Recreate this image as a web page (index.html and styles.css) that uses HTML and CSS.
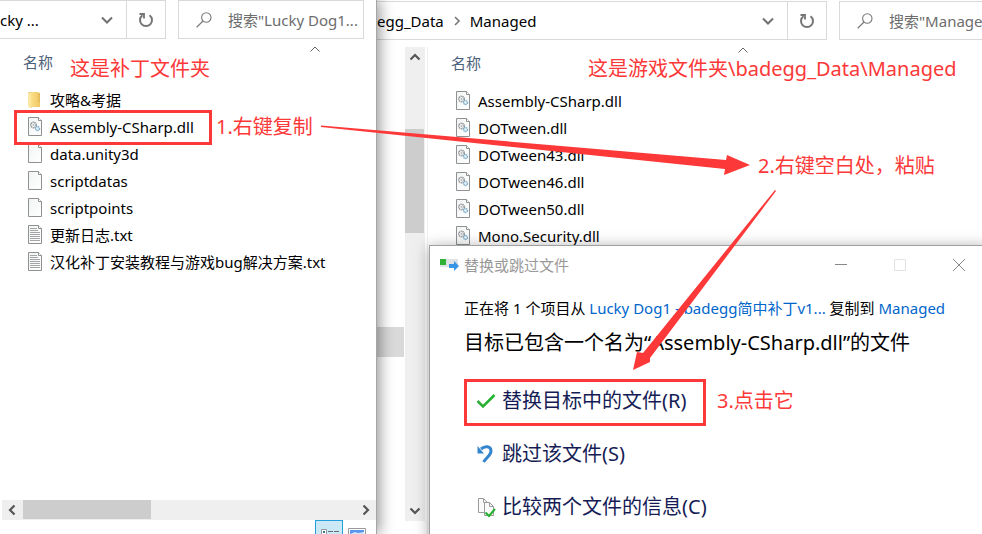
FILE: index.html
```html
<!DOCTYPE html>
<html lang="zh-CN">
<head>
<meta charset="utf-8">
<meta name="viewport" content="width=device-width, initial-scale=1">
<title>补丁安装教程</title>
<link rel="stylesheet" href="styles.css">
</head>
<body>
<svg class="sprites" aria-hidden="true">
  <defs>
    <linearGradient id="paper" x1="0" y1="0" x2="1" y2="1"><stop offset="0" stop-color="#f2f4f4"/><stop offset="1" stop-color="#fff"/></linearGradient>
    <linearGradient id="folder" x1="0" x2="1"><stop offset="0" stop-color="#fbdf86"/><stop offset="1" stop-color="#efc765"/></linearGradient>
    <linearGradient id="tick" x1="0" x2="1"><stop offset="0" stop-color="#2fae3a"/><stop offset="1" stop-color="#22b52c"/></linearGradient>
  </defs>
  <symbol id="i-page" viewBox="0 0 15 19">
    <path d="M.5.5h10l3 3v15H.5z" fill="url(#paper)" stroke="#8e9091"/>
    <path d="M10.500.5v3h3" fill="#fff" stroke="#8e9091"/>
  </symbol>
  <symbol id="i-dll" viewBox="0 0 15 19">
    <use href="#i-page"/>
    <circle cx="5.500" cy="8" r="2.700" fill="none" stroke="#85898c" stroke-width="1.500" stroke-dasharray="1.200 .7"/>
    <circle cx="5.500" cy="8" r="1" fill="#b5b8ba"/>
    <circle cx="9.500" cy="11.500" r="2" fill="#e8f4fb" stroke="#79a9c9" stroke-width="1.400" stroke-dasharray="1.300 .5"/>
  </symbol>
  <symbol id="i-text" viewBox="0 0 15 19">
    <use href="#i-page"/>
    <path d="M2 3.500h7M2 5.500h8M2 7.500h10M2 9.500h10M2 11.500h10M2 13.500h10M2 15.500h10" stroke="#a3a5a6"/>
  </symbol>
  <symbol id="i-folder" viewBox="0 0 15 19">
    <path d="M0 2h8l4 1v14H4l-1 1-3-2z" fill="#e5bd5d"/>
    <path d="M0 2l3 1v15l-3-2z" fill="#fbe6a2"/>
    <path d="M3 2h7v10l2 1v4H3z" fill="url(#folder)"/>
  </symbol>
  <symbol id="i-down" viewBox="0 0 12 8"><path d="M1 1.500l5 5 5-5" fill="none" stroke="#707070" stroke-width="2"/></symbol>
  <symbol id="i-arrow" viewBox="0 0 12 8"><path d="M1.500 1.500L6 6l4.500-4.500" fill="none" stroke="#555" stroke-width="2.200"/></symbol>
  <symbol id="i-sort" viewBox="0 0 10 6"><path d="M.5 5.500L5 1l4.500 4.500" fill="none" stroke="#666"/></symbol>
  <symbol id="i-refresh" viewBox="0 0 16 16">
    <path d="M11.500 3.200A6 6 0 1 1 4.500 3.200" fill="none" stroke="#757575" stroke-width="2"/>
    <path d="M1.500 2H6v4.500" fill="none" stroke="#757575" stroke-width="1.800"/>
  </symbol>
  <symbol id="i-search" viewBox="0 0 16 16">
    <circle cx="10.300" cy="5.500" r="4.700" fill="none" stroke="#7a7a7a" stroke-width="1.100"/>
    <path d="M7 9L.7 15.200" stroke="#7a7a7a" stroke-width="1.200"/>
  </symbol>
</svg>

<div class="desktop">
  <section class="explorer source" aria-label="Lucky Dog1">
    <div class="toolbar">
      <div class="address">
        <span class="crumb">cky ...</span>
        <button class="icon-btn drop" aria-label="展开"><svg class="chev"><use href="#i-down"/></svg></button>
        <button class="icon-btn refresh" aria-label="刷新"><svg class="glyph"><use href="#i-refresh"/></svg></button>
      </div>
      <label class="search"><svg class="glyph"><use href="#i-search"/></svg><input type="text" aria-label="搜索" placeholder="搜索&quot;Lucky Dog1..."></label>
    </div>
    <div class="listing">
      <div class="head"><button class="column">名称</button><svg class="sort"><use href="#i-sort"/></svg></div>
      <ul class="files">
        <li><svg class="file"><use href="#i-folder"/></svg>攻略&amp;考据</li>
        <li><svg class="file"><use href="#i-dll"/></svg>Assembly-CSharp.dll</li>
        <li><svg class="file"><use href="#i-page"/></svg>data.unity3d</li>
        <li><svg class="file"><use href="#i-page"/></svg>scriptdatas</li>
        <li><svg class="file"><use href="#i-page"/></svg>scriptpoints</li>
        <li><svg class="file"><use href="#i-text"/></svg>更新日志.txt</li>
        <li><svg class="file"><use href="#i-text"/></svg>汉化补丁安装教程与游戏bug解决方案.txt</li>
      </ul>
    </div>
    <div class="hscroll">
      <button class="step" aria-label="向左"><svg class="chev left"><use href="#i-arrow"/></svg></button>
      <div class="track"><div class="thumb"></div></div>
      <button class="step" aria-label="向右"><svg class="chev right"><use href="#i-arrow"/></svg></button>
    </div>
    <div class="status">
      <button class="view on" aria-label="详细信息"><svg viewBox="0 0 20 12"><path d="M1.500 1.500h5v5h-5zM1.500 6.500h5v5h-5z" fill="#fff" stroke="#8d9a9f"/><path d="M3 3h2v2H3zM3 8h2v2H3z" fill="#3f7583"/><path d="M8 3.500h5M14 3.500h5M8 8.500h5M14 8.500h5" stroke="#666e71"/></svg></button>
      <button class="view" aria-label="大图标"><svg viewBox="0 0 18 12"><path d="M.5.5h17v12H.5z" fill="#fff" stroke="#999"/><path d="M2 2h14v10H2z" fill="#5897ef"/><path d="M2 6l5-2 3 1 6-1v8H2z" fill="#cfe5fb"/><path d="M2 9l14-1v4H2z" fill="#4c7f75"/></svg></button>
    </div>
  </section>

  <section class="explorer target" aria-label="Managed">
    <div class="toolbar">
      <div class="address">
        <span class="crumb">egg_Data</span>
        <svg class="sep" viewBox="0 0 6 10"><path d="M1 1l4 4-4 4" fill="none" stroke="#777" stroke-width="1.600"/></svg>
        <span class="crumb">Managed</span>
        <button class="icon-btn drop" aria-label="展开"><svg class="chev"><use href="#i-down"/></svg></button>
        <button class="icon-btn refresh" aria-label="刷新"><svg class="glyph"><use href="#i-refresh"/></svg></button>
      </div>
      <label class="search"><svg class="glyph"><use href="#i-search"/></svg><input type="text" aria-label="搜索" placeholder="搜索&quot;Managed&quot;"></label>
    </div>
    <div class="panes">
      <div class="nav"><div class="selected"></div></div>
      <div class="vscroll">
        <button class="step" aria-label="向上"><svg class="chev up"><use href="#i-arrow"/></svg></button>
        <div class="track"><div class="thumb"></div></div>
        <button class="step" aria-label="向下"><svg class="chev"><use href="#i-arrow"/></svg></button>
      </div>
      <div class="listing">
        <div class="head"><button class="column">名称</button><svg class="sort"><use href="#i-sort"/></svg></div>
        <ul class="files">
          <li><svg class="file"><use href="#i-dll"/></svg>Assembly-CSharp.dll</li>
          <li><svg class="file"><use href="#i-dll"/></svg>DOTween.dll</li>
          <li><svg class="file"><use href="#i-dll"/></svg>DOTween43.dll</li>
          <li><svg class="file"><use href="#i-dll"/></svg>DOTween46.dll</li>
          <li><svg class="file"><use href="#i-dll"/></svg>DOTween50.dll</li>
          <li><svg class="file"><use href="#i-dll"/></svg>Mono.Security.dll</li>
        </ul>
      </div>
    </div>
  </section>

  <section class="dialog" role="dialog" aria-label="替换或跳过文件">
    <div class="titlebar">
      <svg class="copy" viewBox="0 0 19 13"><path d="M0 1h18v8H0z" fill="#dfe2e5"/><path d="M0 1h6v6H0z" fill="#2eb135"/><path d="M9 6h5V3l5 5-5 5v-3H9z" fill="#3795e6"/></svg>
      <span class="title">替换或跳过文件</span>
      <button class="win" aria-label="最小化"><svg viewBox="0 0 12 12"><path d="M0 5.500h12" stroke="#888"/></svg></button>
      <button class="win" aria-label="最大化" disabled><svg viewBox="0 0 12 12"><path d="M.5.5h11v11H.5z" fill="none" stroke="#e2e2e2"/></svg></button>
      <button class="win" aria-label="关闭"><svg viewBox="0 0 12 12"><path d="M0 0l12 12M12 0L0 12" stroke="#888"/></svg></button>
    </div>
    <div class="content">
      <p class="summary">正在将 1 个项目从 <a href="#">Lucky Dog1 - badegg简中补丁v1...</a> 复制到 <a href="#">Managed</a></p>
      <h1 class="question">目标已包含一个名为“Assembly-CSharp.dll”的文件</h1>
      <div class="choices">
        <button class="choice"><svg viewBox="0 0 20 20"><path d="M1.500 10l5.500 5.500L18.500 4" fill="none" stroke="url(#tick)" stroke-width="2.600"/></svg>替换目标中的文件(R)</button>
        <button class="choice"><svg viewBox="0 0 20 20"><path d="M5 5c4-3.500 10-3 10 2 0 4-4 6-7.500 11" fill="none" stroke="#3585cc" stroke-width="3"/><path d="M1.500 2v7.500H8z" fill="#3585cc"/></svg>跳过该文件(S)</button>
        <button class="choice"><svg viewBox="0 0 20 20"><path d="M2.500 1.500h5l4 4v10h-9z" fill="#fafafa" stroke="#9a9a9a"/><path d="M7.500 1.500v4h4" fill="none" stroke="#9a9a9a"/><path d="M8.500 5.500h5l4 4v9h-9z" fill="#fafafa" stroke="#9a9a9a"/><path d="M13.500 5.500v4h4" fill="none" stroke="#9a9a9a"/><path d="M9.500 15.500l3.500 3.500 6-7" fill="none" stroke="#23b12c" stroke-width="2"/></svg>比较两个文件的信息(C)</button>
      </div>
    </div>
  </section>

  <div class="notes">
    <div class="frame frame-file"></div>
    <div class="frame frame-replace"></div>
    <span class="note note-patch">这是补丁文件夹</span>
    <span class="note note-game">这是游戏文件夹\badegg_Data\Managed</span>
    <span class="note note-one">1.右键复制</span>
    <span class="note note-two">2.右键空白处，粘贴</span>
    <span class="note note-three">3.点击它</span>
    <svg class="arrows" viewBox="0 0 982 534" aria-hidden="true">
      <path d="M321 125.500L726 160L727 155L750 165L724 175L725 169L321 127Z"/>
      <path d="M775 190L776 191L650 358L650 362L633 370L637 352L643 353Z"/>
    </svg>
  </div>
</div>
</body>
</html>
```
FILE: styles.css
```css
* { box-sizing: border-box; }

body {
  margin: 0;
  background: #fff;
  color: #000;
  font: 15px/20px "Noto Sans", "Noto Sans CJK SC", sans-serif;
}

button {
  margin: 0;
  padding: 0;
  border: 0;
  background: none;
  color: inherit;
  font: inherit;
}

svg { display: block; flex: none; overflow: visible; }
ul, p, h1 { margin: 0; padding: 0; }
.sprites { position: absolute; width: 0; height: 0; }

.desktop {
  position: relative;
  display: grid;
  grid-template-columns: 376px minmax(0, 1fr);
  height: 100vh;
  overflow: hidden;
}

.explorer { display: flex; flex-direction: column; min-width: 0; min-height: 0; background: #fff; }
.source { z-index: 1; box-shadow: 1px 0 0 #a5a5a5, 3px 0 14px rgba(0, 0, 0, .45); }
.target { padding-top: 1px; }

/* Address and search bars */
.toolbar { display: flex; flex: none; gap: 12px; height: 39px; }
.source .toolbar { padding-right: 12px; }
.address { display: flex; align-items: center; border: 1px solid #d9d9d9; border-left: 0; }
.source .address { width: 166px; }
.target .address { width: 451px; flex: none; }
.target .address .crumb:first-child { padding-left: 1px; }
.sep { width: 6px; height: 10px; margin: 0 10px; }
.icon-btn { display: grid; place-items: center; width: 38px; height: 100%; }
.drop { margin-left: auto; }
.refresh { width: 39px; border-left: 1px solid #d9d9d9; }
.chev { width: 12px; height: 8px; }
.glyph { width: 16px; height: 16px; }
.search { display: flex; flex: 1; align-items: center; gap: 16px; min-width: 0; padding-left: 17px; border: 1px solid #d9d9d9; }
.target .search { border-right: 0; }
.search input { flex: 1; min-width: 0; padding: 0; border: 0; outline: 0; background: none; font: inherit; }
.search input::placeholder { color: #6d6d6d; opacity: 1; }

/* File lists */
.listing { flex: 1; min-width: 0; min-height: 0; padding: 7px 0 0 23px; }
.head { display: flex; align-items: flex-start; height: 40px; }
.column { margin-top: 6px; color: #4c607a; }
.sort { width: 10px; height: 6px; margin-left: 257px; }
.files { list-style: none; }
.files li { display: flex; align-items: center; gap: 7px; height: 27px; padding-left: 5px; white-space: nowrap; }
.file { width: 15px; height: 19px; }

/* Scroll bars */
.hscroll { display: flex; flex: none; height: 20px; margin-left: 2px; background: #efefef; }
.step { display: grid; flex: none; place-items: center; width: 20px; height: 20px; }
.track { flex: 1; }
.thumb { background: #cdcdcd; }
.hscroll .thumb { width: 128px; height: 19px; margin-left: 1px; }
.left { transform: rotate(90deg); }
.right { transform: rotate(-90deg); }
.up { transform: rotate(180deg); }
.vscroll { display: flex; flex: none; flex-direction: column; width: 20px; margin-bottom: 13px; background: #efefef; }
.vscroll .thumb { width: 19px; height: 104px; margin-top: 62px; }

.status { display: flex; flex: none; justify-content: flex-end; gap: 4px; height: 14px; padding-right: 9px; overflow: hidden; }
.view { flex: none; width: 20px; height: 28px; padding: 7px 1px; }
.view svg { width: 18px; height: 12px; }
.view.on { width: 28px; padding: 6px 4px; border: 1px solid #26a0da; background: #cbe8f6; }
.view.on svg { width: 20px; }

.panes { display: flex; flex: 1; min-height: 0; padding-top: 7px; }
.panes .listing { margin-left: 2px; padding-top: 0; border-left: 1px solid #f0f0f0; }
.nav { width: 29px; padding-top: 280px; }
.selected { width: 28px; height: 30px; background: #d9d9d9; }

/* Conflict dialog, floating over the target window */
.dialog {
  position: absolute;
  z-index: 2;
  top: 245px;
  right: -7px;
  bottom: -60px;
  left: 429px;
  border: 1px solid #a0a0a0;
  background: #fff;
  box-shadow: 0 2px 14px rgba(0, 0, 0, .35);
}
.titlebar { display: flex; align-items: center; height: 37px; padding-left: 10px; color: #999; }
.copy { width: 19px; height: 13px; margin-right: 5px; }
.title { margin-right: auto; }
.win { display: grid; flex: none; place-items: center; width: 59px; height: 36px; }
.win svg { width: 12px; height: 12px; }
.content { padding: 15px 12px 0 34px; }
.summary { white-space: nowrap; }
.summary a { color: #0066cc; text-decoration: none; }
.question { margin-top: 10px; font-size: 20px; line-height: 30px; font-weight: 400; white-space: nowrap; }
.choices { display: flex; flex-direction: column; align-items: flex-start; gap: 6px; margin-top: 19px; }
.choice { display: flex; align-items: center; gap: 6px; width: 242px; height: 47px; padding-left: 12px; color: #151c55; font-size: 20px; line-height: 30px; white-space: nowrap; }
.choice svg { width: 20px; height: 20px; }

/* Tutorial annotations drawn over the windows */
.notes { position: absolute; z-index: 3; inset: 0; color: #fc3838; font-size: 20px; line-height: 30px; pointer-events: none; }
.note, .frame { position: absolute; white-space: nowrap; }
.frame { border: 3px solid #fc3838; }
.frame-file { top: 110px; left: 14px; width: 198px; height: 35px; }
.frame-replace { top: 379px; left: 464px; width: 242px; height: 47px; }
.note-patch { top: 54px; left: 70px; }
.note-game { top: 54px; left: 588px; }
.note-one { top: 112px; left: 216px; }
.note-two { top: 151px; left: 758px; }
.note-three { top: 386px; left: 717px; }
.arrows { position: absolute; top: 0; left: 0; width: 982px; height: 534px; fill: #fc3838; }
```
